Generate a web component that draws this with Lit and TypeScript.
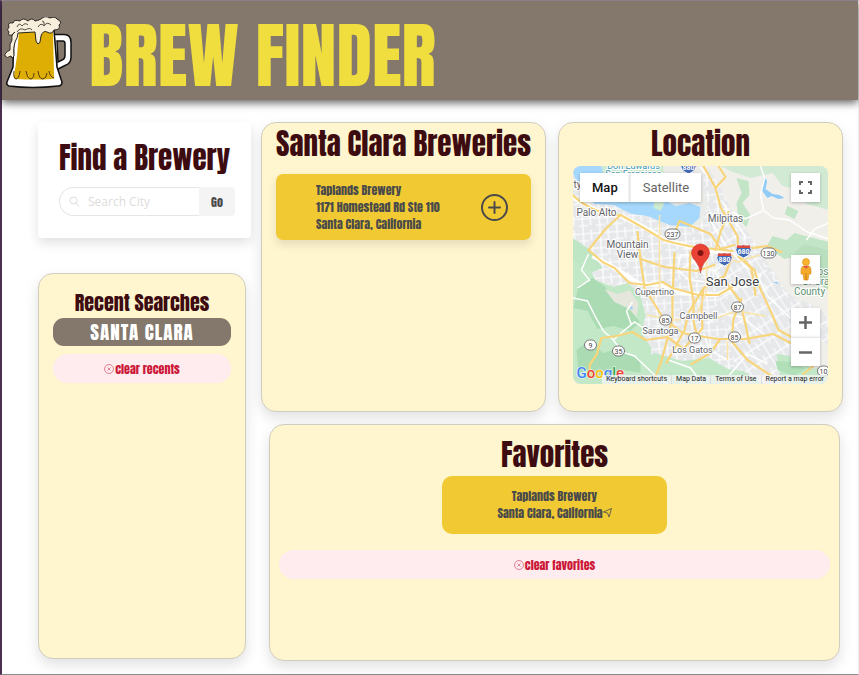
import { LitElement, html, svg, css } from "lit";
import { customElement, property, state } from "lit/decorators.js";

interface Brewery {
  name: string;
  street: string;
  place: string;
}

const clearIcon = html`<svg class="clear-icon" viewBox="0 0 20 20" width="10" height="10" aria-hidden="true">
  <circle cx="10" cy="10" r="9" /><path d="M7 7l6 6M13 7l-6 6" />
</svg>`;

@customElement("beer-logo")
class BeerLogo extends LitElement {
  static styles = css`
    :host { display: block; }
    svg { display: block; }
  `;
  render() {
    return html`<svg width="70" height="72" viewBox="3 17 70 72" role="img" aria-label="Beer mug">
      <path d="M53 34.500h11q7 0 7 8v15q0 6-6 8l-8 4-3-35z" fill="#fff" stroke="#111" stroke-width="1.500" />
      <path d="M57 41h6q2 0 2 3v11q0 4-3 5l-4 2z" fill="#84776b" stroke="#111" stroke-width="1.500" />
      <path d="M14 30h40l3 37 5 15q0 4-4 4-26 3-49 0-3-1-2-4l6-15z" fill="#fff" stroke="#111" stroke-width="1.500" />
      <path d="M19 31h34l1 45q1 3-2 3-18 1-36 0-3 0-2-3l3-20z" fill="#dfae05" />
      <path d="M14 71q-1 7 2 8 3 0 4-8M26 71q1 7 4 8 4 0 4-6M38 71q1 8 5 8 3 0 4-6M49 71q1 6 5 7" fill="none" stroke="#513909" />
      <path d="M15 32q-4 2-3 8-3 4-2 10-6 3-5 6 2 3 6 0l1 2 2-2q-1-8 1-14 3-5 3-9l17-1 1 9q2 5 4 1l1-6q2-6 6-4 5 3 7-2 7 0 5-5 4-3-2-6-2-3-7-1-5-3-9 1-4 2-6 2-3-4-7 0-5-4-8 0-6-2-7 2-6-1-4 4-3 3 0 5-2 4 3 3z" fill="#f7efdc" stroke="#29251f" />
      <path d="M17 27q2-5 5-1 3-4 6-1M38 27q3-5 6-1 3-5 7-1M42 21q3 0 2 4M17 32q3-5 8-2 5-3 7 0" fill="none" stroke="#29251f" stroke-width=".8" />
    </svg>`;
  }
}

@customElement("brewery-map")
class BreweryMap extends LitElement {
  @state() private satellite = false;

  static styles = css`
    :host { display: block; position: relative; overflow: hidden; border-radius: 8px; font-family: Roboto, sans-serif; }
    .canvas { display: block; width: 100%; height: 218px; }
    .place { font-size: 10px; fill: #5f6368; text-anchor: middle; stroke: #fff; stroke-width: 2px; paint-order: stroke; }
    .small { font-size: 9px; }
    .city { font-size: 13px; fill: #3c4043; }
    .park { fill: #5b9270; }
    .bay { fill: #3b93ad; font-size: 9px; }
    .shield { font-size: 7px; fill: #444; text-anchor: middle; }
    .interstate { font-size: 7px; font-weight: 700; fill: #fff; text-anchor: middle; }
    .google { font-size: 15px; font-weight: 500; stroke: #fff; stroke-width: 1px; paint-order: stroke; }
    button { border: 0; padding: 0; background: #fff; font-family: inherit; box-shadow: 0 1px 3px rgba(0, 0, 0, .25); cursor: pointer; }
    .types { position: absolute; left: 7px; top: 7px; display: flex; }
    .types button { height: 29px; padding: 0 12px; font-size: 13px; color: #666; }
    .types .active { color: #111; font-weight: 500; }
    .types button + button { border-left: 1px solid #eee; }
    .tools { position: absolute; right: 8px; top: 7px; bottom: 18px; display: flex; flex-direction: column; gap: 24px; }
    .tools button { display: block; width: 29px; height: 29px; }
    .full { margin-bottom: auto; }
    .tools svg { display: block; margin: auto; }
    .zoom { display: flex; flex-direction: column; }
    .zoom button + button { border-top: 1px solid #e6e6e6; }
    .legal { position: absolute; right: 0; bottom: 0; display: flex; background: rgba(245, 245, 245, .75); font-size: 7px; line-height: 9px; white-space: nowrap; }
    .legal a { color: #222; text-decoration: none; padding: 0 4px; }
    .legal a + a { border-left: 1px solid #ddd; }
  `;

  private shield(x: number, y: number, label: string) {
    const w = label.length > 2 ? 15 : 12;
    return svg`<rect x=${x - w / 2} y=${y - 5} width=${w} height="10" rx="5" fill="#fff" stroke="#777" />
      <text class="shield" x=${x} y=${y + 3}>${label}</text>`;
  }

  private interstate(x: number, y: number, label: string) {
    return svg`<g transform="translate(${x} ${y})">
      <path d="M-6-6q3 1 6 0 3 1 6 0 3 5 1 8-2 3-7 5-5-2-7-5-2-3 1-8z" fill="#4269b5" stroke="#fff" />
      <path d="M-6-6q3 1 6 0 3 1 6 0l1 3H-7z" fill="#d9493e" />
      <text class="interstate" x="0" y="3">${label}</text></g>`;
  }

  render() {
    return html`
      <svg class="canvas" viewBox="572 166 256 218" preserveAspectRatio="xMidYMid slice" role="img" aria-label="Map of San Jose">
        <defs>
          <pattern id="streets" width="17" height="15" patternUnits="userSpaceOnUse" patternTransform="rotate(-4)">
            <path d="M0 4h17M0 11h10M4 0v15M12 0v11" fill="none" stroke="#fff" stroke-width="1.200" />
          </pattern>
          <pattern id="slanted" width="15" height="13" patternUnits="userSpaceOnUse" patternTransform="rotate(58)">
            <path d="M0 4h15M0 10h9M5 0v13" fill="none" stroke="#fff" stroke-width="1.200" />
          </pattern>
        </defs>
        <rect x="572" y="166" width="256" height="218" fill="#e7e8ea" />
        <rect x="572" y="166" width="256" height="218" fill="url(#streets)" />
        <path d="M706 202l40 40 30 42 52 40v60h-90l-20-90z" fill="#e7e8ea" />
        <path d="M706 202l40 40 30 42 52 40v60h-90l-20-90z" fill="url(#slanted)" />
        <path d="M706 166h122v150l-18-12-22-10-18-26-18-30-18-20-14-32z" fill="#f0efea" />
        <path d="M656 166h45l5 42-7 18-28-8-13-18z" fill="#ebece8" />
        <path d="M720 166h108v44l-22-6-8-14-16-4-10-13-22 5-20-7z" fill="#d2ead4" />
        <path d="M736 178l12 3 1 14-7 8 8 12-4 12-8-7-2-17 5-10zM772 236l14 4 8-7 34 9v24l-26-11-18 4-18-12zM787 206l11 5-4 8-10-5z" fill="#c3e5c7" />
        <path d="M794 252l10-8 24 6v40l-22-13z" fill="#b9dfbe" />
        <path d="M572 257l16 8 7 15 18 7 14-4 12 10 6 22-4 18 10 15-2 20 22 7 8 9H572z" fill="#c2e8c8" />
        <path d="M572 238l18 12 12 18-10 4-20-12z" fill="#bee6c4" />
        <path d="M578 286l14-8 13 9 9 15 16 8 9 12-9 9-17-5-16 3-10-18-14-3zM576 350l12-9 15 12 16-5 22 12 7 14-26-4-17 9-15-9-12 3z" fill="#aadbb2" />
        <path d="M604 289l13 5 12-4 9 13-2 14-8-9-14-6z" fill="#e5e7dd" />
        <path d="M640 358l15-5 26 8 28-3 18 11 16 2 20 13H640zM776 354l20 3 16 12 16-2v17h-47z" fill="#c2e8c8" />
        <path d="M775 361l18 1 12 7-11 7-17-6z" fill="#b1dfb8" />
        <path d="M782 329l17-2 29 18v28l-22-9-14-19z" fill="#f0efea" />
        <path d="M572 166h28l7 8 16-3 14 5h22l2 22 14 8 14-3 11 4-1 11-10 9-20-2-22-9-16-2-18-9-19-1-16-18-6-14z" fill="#a5d8fc" />
        <path d="M601 166h62v12l-19 4-25-7-15 6zM654 200l10 3-4 8-7-3z" fill="#cdebd0" />
        <path d="M763 178q5 1 3 6l-1 5 7 5 7 1 5 3-6 1-7-3-4 2-6-8zM629 308l3-2v4zM772 282h5v2z" fill="#91ccf8" />
        <g fill="none" stroke="#fff" stroke-width="1.500">
          <path d="M572 298l15 3 8 16 8 14 9 8 10 13 12 4 18 17 15 11M613 340l10-9 11-9 9 6M632 302l-6 9 5 14M588 254l-7 16 8 10-12 8M760 166l4 12-4 17 3 15 10 8 16 2 18 12 21 7M762 211l-17 8-13-7M700 167l8 10M806 240l8-11 14-6" />
          <path d="M706 214l19 31 17 19 15 11 10 21 23 22M722 202l23 35M729 260l-15 11 8 13 24 3 15-12M706 324l15-10 20 3 25 19M729 375l18-21 20 10M668 360l22 8 12 16M703 333l6 17 18 10" />
          <path d="M680 255h17l13 13-3 14-18-2-12-10zM690 258l14 17M681 269l22-14" />
        </g>
        <g fill="none" stroke="#fff" stroke-width="4.500" stroke-linejoin="round">
          <path d="M572 197q23 16 48 19 26 11 44 24 25 7 42 10l23 4" />
          <path d="M592 256l17 9 30 19 24 1 17 8 36 2 18-8" />
        </g>
        <g fill="none" stroke="#f8d57b" stroke-width="2.200" stroke-linejoin="round" stroke-linecap="round">
          <path d="M572 195q20 19 48 20 24 13 43 25 24 7 41 8l28 3M620 215l-15 14-17 21M588 250l14 12 12 6 15 15 18 2 15-3 10 6 26 7h20l17-10M637 232l3 28 4 28 18 29 20 16 10 2 25 4h28l28-5 17 9h20" />
          <path d="M703 166l12 22 5 19 17 29 1 17 13 16 4 26M715 188l10-11-7-11M728 212l-8 20-5 18M672 238l7-17 31 13 10 15 14-4M738 250l29-4 14 6M674 253l-2 45v20l-7 28-5 18-8 20M690 252l-1 25 4 24v20l4 17" />
          <path d="M732 256l-8 20-21 12-15 25-4 17-18 33M703 288l-2 20 1 20-8 10M738 257l16 13 5 17 12 26 7 17 22 12M723 279l16 21 5 20 5 23M741 299l-8 20-2 22 16 19 24 16M640 259l24 8 32 4 18-6M590 378l-1-13 7-10 5-17 15-2 16-4 13 8 22-3 16 12 8-9M719 340l-9 13-19 11M803 374l13-11" />
        </g>
        <g fill="none" stroke="#fae4a8" stroke-width="1.500">
          <path d="M706 252v39l-9 22M659 215v72l-6 11M718 254l19 8 22-7M713 319l23-8 29 5M646 315l28 5 43-3M727 341v19" />
        </g>
        <text class="place bay" x="633" y="169">Don Edwards</text>
        <text class="place bay" x="633" y="177">San Francisco</text>
        <text class="place" x="577" y="188">ty</text>
        <text class="place" x="596" y="216">Palo Alto</text>
        <text class="place" x="725" y="222">Milpitas</text>
        <text class="place" x="627" y="248">Mountain</text>
        <text class="place" x="627" y="258">View</text>
        <text class="place small" x="654" y="295">Cupertino</text>
        <text class="place small" x="698" y="319">Campbell</text>
        <text class="place small" x="660" y="334">Saratoga</text>
        <text class="place small" x="692" y="353">Los Gatos</text>
        <text class="place city" x="732" y="286">San Jose</text>
        <text class="place park" x="828" y="275">Joseph</text>
        <text class="place park" x="820" y="285">D. Grant</text>
        <text class="place park" x="809" y="295">County</text>
        ${this.shield(672, 234, "237")}${this.shield(768, 253, "130")}
        ${this.shield(737, 307, "87")}${this.shield(665, 320, "85")}
        ${this.shield(734, 337, "85")}${this.shield(694, 338, "17")}
        ${this.shield(590, 345, "9")}${this.shield(618, 351, "35")}
        ${this.shield(823, 371, "10")}
        ${this.interstate(688, 167, "880")}${this.interstate(743, 251, "680")}
        ${this.interstate(724, 259, "880")}
        <path d="M700 273q-1-7-5-12-4-4-4-8a9 9 0 0 1 18 0q0 4-4 8-4 5-5 12z" fill="#ea4335" stroke="#c5221f" stroke-width=".5" />
        <circle cx="700" cy="253" r="3" fill="#811411" />
        <text class="google" x="576" y="378"><tspan fill="#4285f4">G</tspan><tspan fill="#ea4335">o</tspan><tspan fill="#fbbc04">o</tspan><tspan fill="#4285f4">g</tspan><tspan fill="#34a853">l</tspan><tspan fill="#ea4335">e</tspan></text>
      </svg>
      <div class="types">
        <button class=${this.satellite ? "" : "active"} @click=${() => (this.satellite = false)}>Map</button>
        <button class=${this.satellite ? "active" : ""} @click=${() => (this.satellite = true)}>Satellite</button>
      </div>
      <div class="tools">
        <button class="full" aria-label="Toggle fullscreen"><svg width="13" height="13" viewBox="0 0 13 13"><path d="M1 4V1h3M9 1h3v3M12 9v3H9M4 12H1V9" fill="none" stroke="#666" stroke-width="2" /></svg></button>
        <button aria-label="Street View"><svg width="14" height="24" viewBox="0 0 14 24"><circle cx="7" cy="4" r="3.500" fill="#fbb52c" stroke="#d98c14" stroke-width=".6" /><path d="M4 8h6q2 1 2 4v4h-2l-1 6H5l-1-6H2v-4q0-3 2-4z" fill="#f5aa2c" stroke="#d98c14" stroke-width=".6" /><path d="M4 8l3 3 3-3z" fill="#e2574c" /><path d="M7 15v7" stroke="#c67d0d" /></svg></button>
        <div class="zoom">
          <button aria-label="Zoom in"><svg width="13" height="13" viewBox="0 0 13 13"><path d="M0 6.500h13M6.500 0v13" stroke="#666" stroke-width="2.500" /></svg></button>
          <button aria-label="Zoom out"><svg width="13" height="13" viewBox="0 0 13 13"><path d="M0 6.500h13" stroke="#666" stroke-width="2.500" /></svg></button>
        </div>
      </div>
      <nav class="legal"><a href="#shortcuts">Keyboard shortcuts</a><a href="#data">Map Data</a><a href="#terms">Terms of Use</a><a href="#report">Report a map error</a></nav>
    `;
  }
}

@customElement("app-root")
class AppRoot extends LitElement {
  @property() city = "Santa Clara";
  @state() private breweries: Brewery[] = [
    { name: "Taplands Brewery", street: "1171 Homestead Rd Ste 110", place: "Santa Clara, California" },
  ];

  static styles = css`
    :host { display: block; font-family: Anton, "Liberation Sans Narrow", "Liberation Sans", sans-serif; color: #4a4a4a; background: #fff; }
    * { box-sizing: border-box; }
    .frame { min-height: 100vh; border-left: 2px solid #4b3050; border-top: 1px solid #9a909c; border-bottom: 1px solid #8c8c8c; border-right: 1px solid #eee; }
    header { display: flex; align-items: center; gap: 16px; height: 99px; padding: 4px 1px 0; background: #84776b; box-shadow: 0 3px 8px rgba(0, 0, 0, .6); }
    h1, h2, h3, p { margin: 0; text-align: center; white-space: nowrap; font-weight: 400; }
    h1 { padding-top: 6px; color: #f0dd3e; font-size: 72px; line-height: 90px; }
    h2 { color: #3d0c11; font-size: 29px; line-height: 42px; }
    h3 { color: #3d0c11; font-size: 20px; line-height: 30px; }
    main { display: grid; grid-template-columns: minmax(0, 213fr) minmax(0, 582fr); gap: 10px; padding: 22px 15px 13px 36px; }
    .side { display: flex; flex-direction: column; gap: 35px; }
    .search { min-height: 116px; padding: 15px 16px 20px 21px; border-radius: 4px; background: #fff; box-shadow: 0 5px 12px rgba(0, 0, 0, .12); }
    .search h2 { padding-right: 6px; }
    form { display: flex; margin-top: 8px; height: 29px; }
    .field { flex: 1; min-width: 0; display: flex; align-items: center; gap: 8px; padding: 0 9px; border: 1px solid #e6e6e6; border-right: 0; border-radius: 15px 0 0 15px; }
    input { flex: 1; min-width: 0; border: 0; padding: 0; outline: 0; background: none; font: 12px "Open Sans", sans-serif; color: #444; }
    input::placeholder { color: #dcdcdc; opacity: 1; }
    button { border: 0; font: inherit; cursor: pointer; }
    .go { width: 36px; padding: 0; border-radius: 0 4px 4px 0; background: #f4f4f4; color: #4a4a4a; font-size: 12px; }
    .card { background: #fff5ce; border: 1px solid #d0cdc0; border-radius: 15px; box-shadow: 0 6px 14px rgba(0, 0, 0, .12); }
    .recent { min-height: 386px; width: calc(100% - 5px); padding: 14px; }
    .chip { display: block; width: 100%; height: 28px; padding: 0; border-radius: 11px; background: #84776b; color: #fff; font-size: 19px; line-height: 28px; letter-spacing: 1px; text-transform: uppercase; }
    .clear { display: flex; align-items: center; justify-content: center; gap: 1px; width: 100%; height: 29px; border-radius: 15px; background: #feecef; color: #cc1838; font-size: 12px; }
    .recent .clear { margin-top: 8px; }
    .clear-icon { fill: none; stroke: #cc1838; }
    .content { display: grid; grid-template-columns: repeat(2, minmax(0, 1fr)); gap: 12px; align-content: start; }
    .results, .location { min-height: 290px; padding: 0 14px; }
    .results h2, .location h2 { line-height: 43px; }
    .brewery { display: grid; grid-template-columns: 1fr auto; align-items: center; min-height: 66px; margin-top: 8px; padding: 7px 23px 7px 40px; border-radius: 7px; background: #f1ca33; box-shadow: 0 5px 10px rgba(0, 0, 0, .1); }
    .brewery p { text-align: left; }
    p { font-size: 12px; line-height: 17px; }
    .add { display: block; padding: 0; background: none; }
    .add svg, .add { width: 27px; height: 27px; }
    .favorites { grid-column: 1 / -1; min-height: 237px; margin: 0 3px 0 8px; padding: 9px; }
    .favorite { width: 41%; margin: 0 auto; padding: 12px 0; border-radius: 10px; background: #f1ca33; }
    .favorites .clear { margin-top: 16px; }
  `;

  render() {
    return html`<div class="frame">
      <header><beer-logo></beer-logo><h1>BREW FINDER</h1></header>
      <main>
        <div class="side">
          <section class="search">
            <h2>Find a Brewery</h2>
            <form @submit=${(e: Event) => e.preventDefault()}>
              <label class="field">
                <svg width="11" height="11" viewBox="0 0 11 11" fill="none" stroke="#dcdcdc" aria-hidden="true"><circle cx="4.500" cy="4.500" r="3.500" /><path d="M7 7l3.500 3.500" /></svg>
                <input type="text" placeholder="Search City" aria-label="Search City" />
              </label>
              <button class="go" type="submit">Go</button>
            </form>
          </section>
          <section class="card recent">
            <h3>Recent Searches</h3>
            <button class="chip">${this.city}</button>
            <button class="clear">${clearIcon}clear recents</button>
          </section>
        </div>
        <div class="content">
          <section class="card results">
            <h2>${this.city} Breweries</h2>
            ${this.breweries.map((b) => html`<article class="brewery">
              <div><p>${b.name}</p><p>${b.street}</p><p>${b.place}</p></div>
              <button class="add" aria-label="Add to favorites"><svg viewBox="0 0 27 27" fill="none" stroke="#4a4a4a" stroke-width="2" stroke-linecap="round"><circle cx="13.500" cy="13.500" r="12.500" /><path d="M13.500 8v11M8 13.500h11" /></svg></button>
            </article>`)}
          </section>
          <section class="card location"><h2>Location</h2><brewery-map></brewery-map></section>
          <section class="card favorites">
            <h2>Favorites</h2>
            ${this.breweries.map((b) => html`<article class="favorite">
              <p>${b.name}</p>
              <p>${b.place}<svg width="9" height="10" viewBox="0 0 9 10" fill="none" stroke="#4a4a4a" stroke-width=".8" aria-hidden="true"><path d="M.5 4L8.500.5 6 9 4.500 5z" /></svg></p>
            </article>`)}
            <button class="clear">${clearIcon}clear favorites</button>
          </section>
        </div>
      </main>
    </div>`;
  }
}
